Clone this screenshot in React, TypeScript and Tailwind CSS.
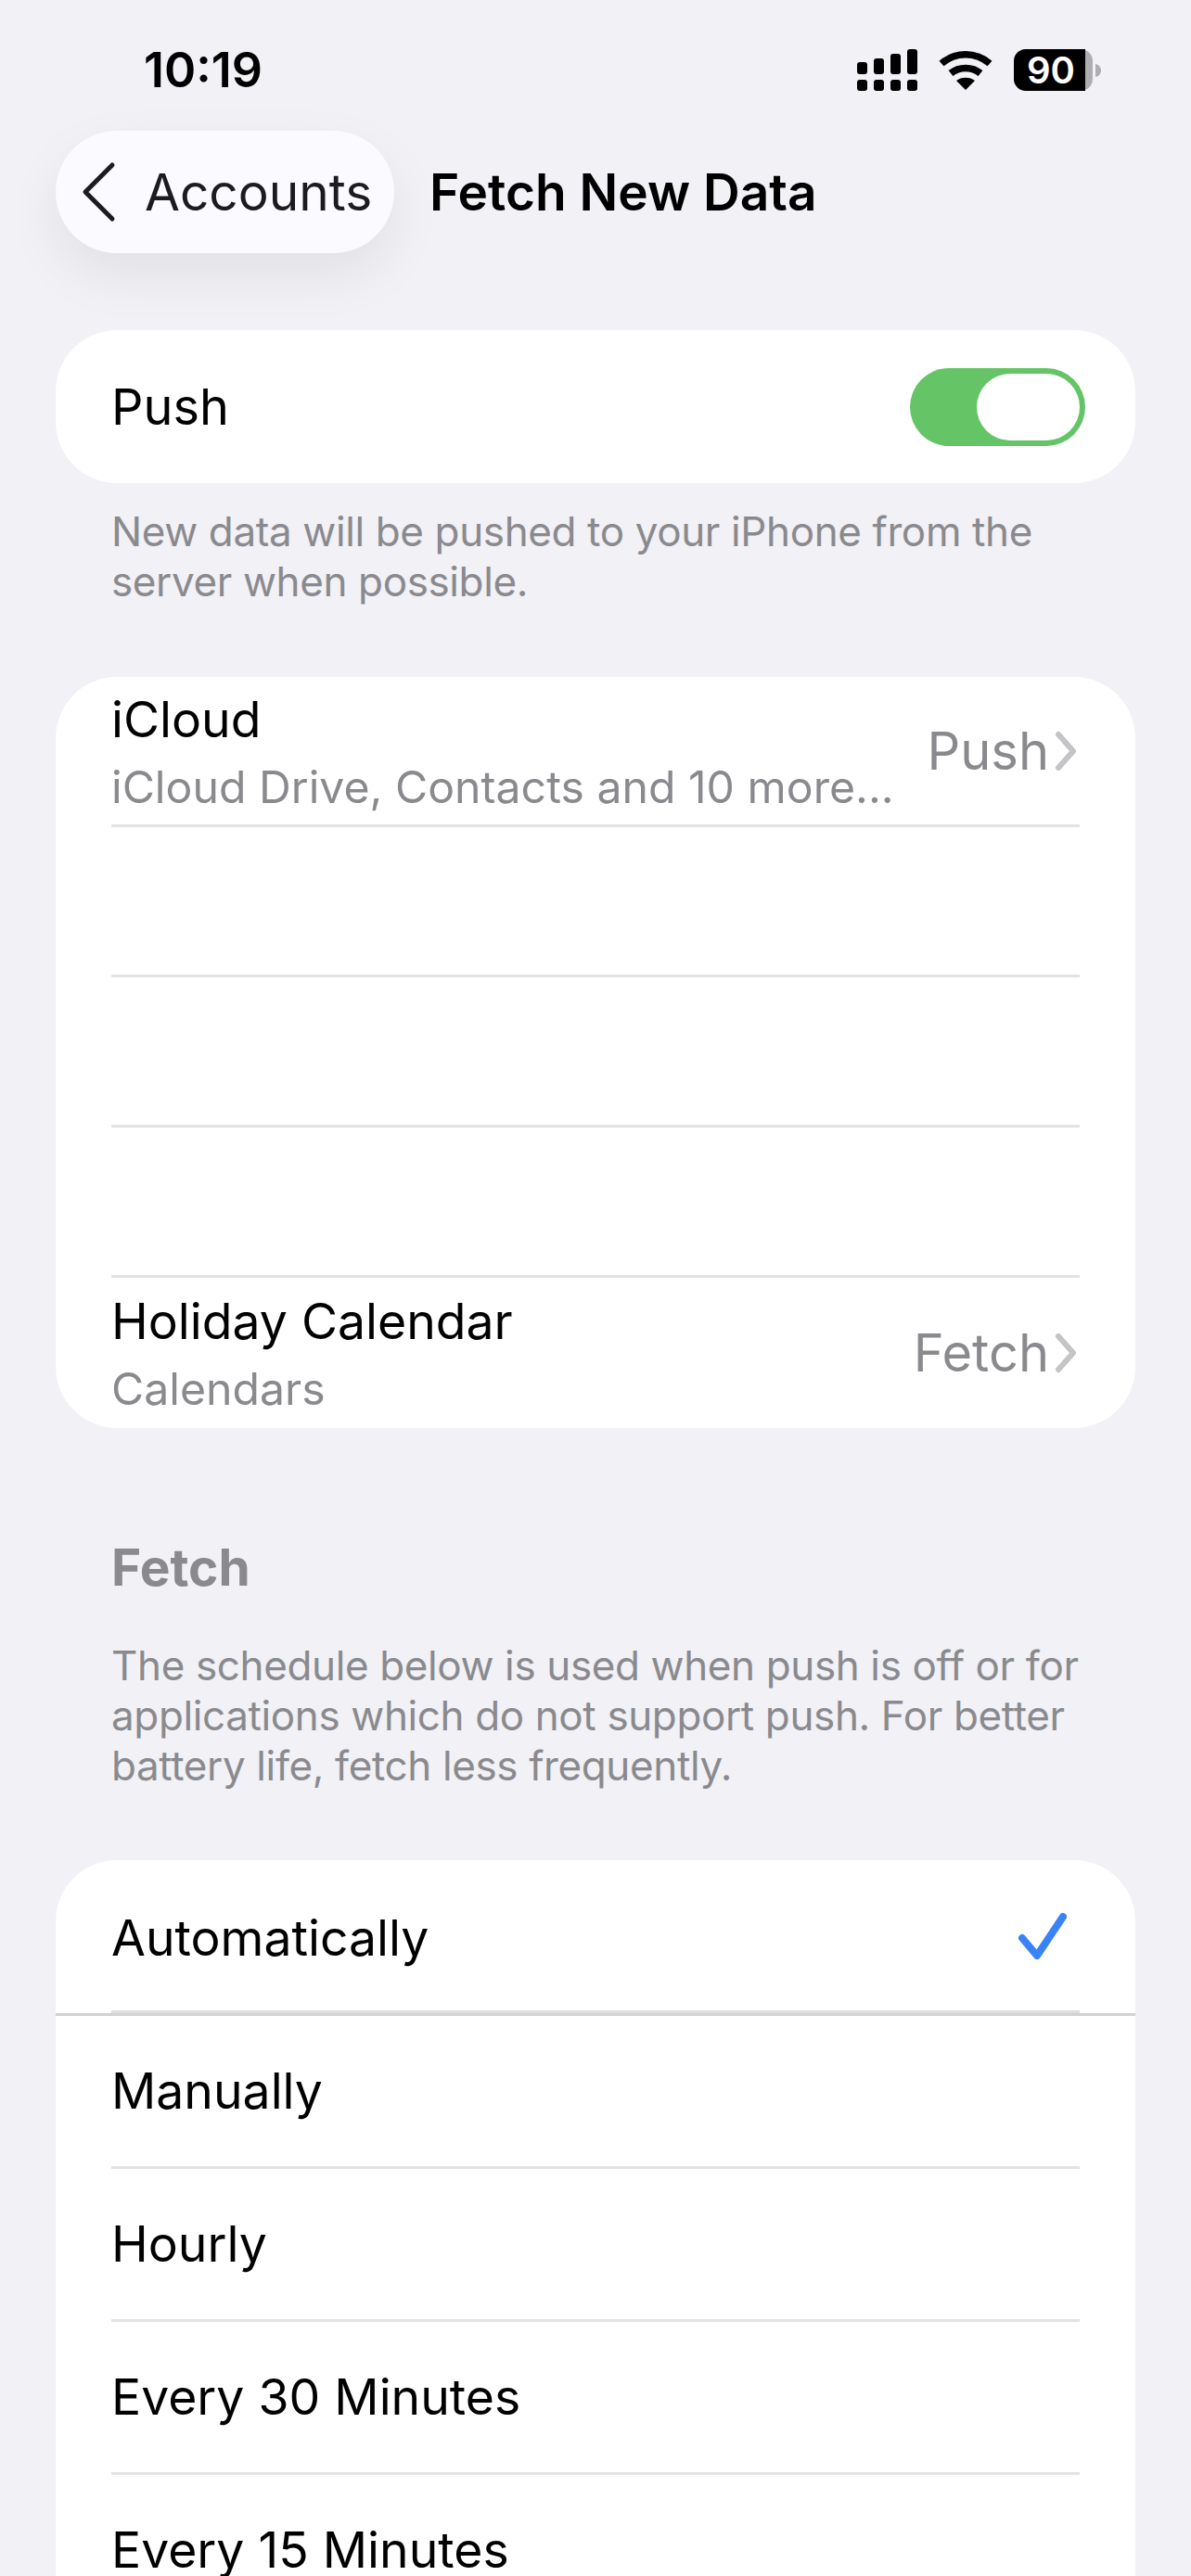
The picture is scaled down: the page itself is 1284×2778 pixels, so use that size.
const ACCOUNT_ROWS = [
  { id: 'icloud', title: 'iCloud', sub: 'iCloud Drive, Contacts and 10 more...', value: 'Push' },
  { id: 'blank-1' },
  { id: 'blank-2' },
  { id: 'blank-3' },
  { id: 'holiday', title: 'Holiday Calendar', sub: 'Calendars', value: 'Fetch' },
]

const SCHEDULE_ROWS = ['Manually', 'Hourly', 'Every 30 Minutes', 'Every 15 Minutes']

function StatusIcons() {
  return (
    <div className="flex items-center">
      <svg width="65" height="45" viewBox="0 0 65 45" fill="#000">
        <rect x="0" y="14" width="11" height="13" rx="3" />
        <rect x="18" y="10" width="11" height="17" rx="3" />
        <rect x="36" y="5" width="11" height="22" rx="3" />
        <rect x="54" y="0" width="11" height="27" rx="3" />
        <rect x="0" y="33" width="11" height="12" rx="3" />
        <rect x="18" y="33" width="11" height="12" rx="3" />
        <rect x="36" y="33" width="11" height="12" rx="3" />
        <rect x="54" y="33" width="11" height="12" rx="3" />
      </svg>
      <svg className="ml-[23px]" width="58" height="42" viewBox="0 0 58 42" fill="none">
        <path d="M3 13.5C18 0.5 40 0.5 55 13.5" stroke="#000" strokeWidth="7.5" strokeLinecap="butt" />
        <path d="M13 24C22 16.5 36 16.5 45 24" stroke="#000" strokeWidth="7.5" />
        <path d="M29 42L19 32C24 27.5 34 27.5 39 32Z" fill="#000" />
      </svg>
      <div className="ml-[23px] flex items-center">
        <div className="flex h-[45px] w-[85px] items-center rounded-[13px] bg-[#aeaeb2]">
          <div className="flex h-full w-[77px] items-center justify-center rounded-l-[13px] bg-black pl-[3px] text-[40px] font-semibold leading-none text-white">
            90
          </div>
        </div>
        <svg className="ml-[3px]" width="6" height="14" viewBox="0 0 6 14">
          <path d="M0 0C4 1 6 4 6 7C6 10 4 13 0 14Z" fill="#aeaeb2" />
        </svg>
      </div>
    </div>
  )
}

function Chevron() {
  return (
    <svg className="ml-[6px] mr-[2px]" width="25" height="44" viewBox="0 0 25 44" fill="none">
      <path d="M4 4L20 22L4 40" stroke="#c4c4c7" strokeWidth="6" strokeLinecap="round" strokeLinejoin="round" />
    </svg>
  )
}

function AccountRow({ title, sub, value, last }: { title?: string; sub?: string; value?: string; last?: boolean }) {
  return (
    <div className={`flex h-[162px] items-center ${last ? '' : 'border-b-[3px] border-[#e3e3e5]'}`}>
      {title && (
        <>
          <div className="min-w-0 flex-1">
            <p className="text-[53.5px] leading-[78px] text-black">{title}</p>
            <p className="text-[48.2px] leading-[68px] text-[#8a8a8e]">{sub}</p>
          </div>
          <span className="text-[56px] text-[#8a8a8e]">{value}</span>
          <Chevron />
        </>
      )}
    </div>
  )
}

export default function App() {
  return (
    <div className="h-[2778px] overflow-hidden bg-[#f1f1f6] font-['Inter',sans-serif]">

      {/* status bar */}
      <div className="flex h-[141px] items-start justify-between pl-[155px] pr-[97px] pt-[45px]">
        <span className="text-[52px] font-semibold leading-[62px] text-black">10:19</span>
        <div className="pt-[8px]">
          <StatusIcons />
        </div>
      </div>

      {/* nav */}
      <div className="flex h-[132px] items-center pl-[60px]">
        <div className="flex h-[132px] w-[365px] shrink-0 items-center rounded-full bg-[#fbfbff] pl-[27px] shadow-[0_24px_60px_rgba(0,0,0,0.07)]">
          <svg width="38" height="66" viewBox="0 0 38 66" fill="none">
            <path d="M34 4L5 33L34 62" stroke="#1c1c1e" strokeWidth="5" strokeLinecap="round" strokeLinejoin="round" />
          </svg>
          <span className="ml-[31px] text-[55px] text-[#1c1c1e]">Accounts</span>
        </div>
        <h1 className="ml-[38px] text-[55px] font-semibold text-black">Fetch New Data</h1>
      </div>

      {/* push */}
      <div className="mx-[60px] mt-[83px] flex h-[165px] items-center justify-between rounded-[66px] bg-white pl-[60px] pr-[54px]">
        <span className="text-[54px] text-black">Push</span>
        <div className="flex h-[84px] w-[189px] items-center justify-end rounded-full bg-[#65c466] pr-[6px]">
          <div className="h-[72px] w-[111px] rounded-full bg-white" />
        </div>
      </div>
      <p className="mx-[120px] mt-[25px] text-[44px] leading-[54px] tracking-[-0.38px] text-[#8a8a8e]">
        New data will be pushed to your iPhone from the server when possible.
      </p>

      {/* accounts */}
      <div className="mx-[60px] mt-[76px] rounded-[66px] bg-white px-[60px]">
        {ACCOUNT_ROWS.map((row, i) => (
          <AccountRow key={row.id} title={row.title} sub={row.sub} value={row.value} last={i === ACCOUNT_ROWS.length - 1} />
        ))}
      </div>

      {/* fetch */}
      <h2 className="mx-[120px] mt-[118px] text-[55px] font-bold leading-[64px] text-[#8a8a8e]">Fetch</h2>
      <p className="mx-[120px] mt-[47px] text-[44px] leading-[54px] tracking-[-0.38px] text-[#8a8a8e]">
        The schedule below is used when push is off or for applications which do not support push. For better battery life, fetch less frequently.
      </p>

      {/* schedule */}
      <div className="mx-[60px] mt-[75px] rounded-t-[66px] bg-white">
        <div className="relative flex h-[168px] items-center justify-between pl-[60px] pr-[74px]">
          <span className="text-[53.5px] text-black">Automatically</span>
          <svg width="54" height="54" viewBox="0 0 54 54" fill="none">
            <path d="M6 27L22 46L50 4" stroke="#3a82f7" strokeWidth="8" strokeLinecap="round" strokeLinejoin="round" />
          </svg>
          <div className="absolute inset-x-[60px] bottom-0 h-[6px] bg-[#dedee0]" />
          <div className="absolute inset-x-0 bottom-0 h-[3px] bg-[#d2d2d5]" />
        </div>
        <div className="px-[60px]">
          {SCHEDULE_ROWS.map((row) => (
            <div key={row} className="flex h-[165px] items-center border-b-[3px] border-[#e3e3e5]">
              <span className="text-[53.5px] text-black">{row}</span>
            </div>
          ))}
        </div>
      </div>
    </div>
  )
}
